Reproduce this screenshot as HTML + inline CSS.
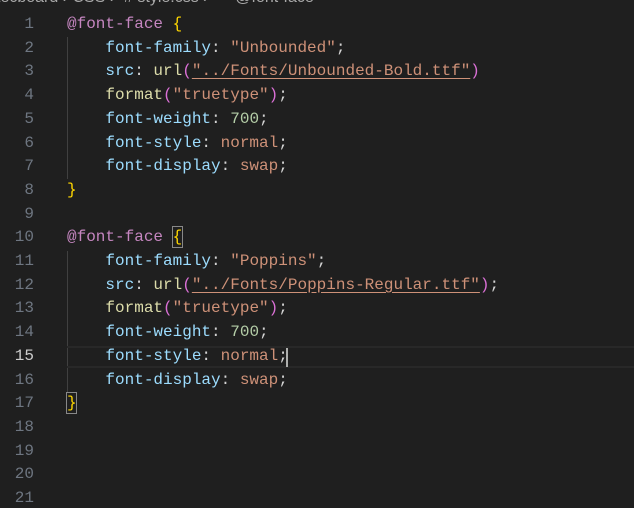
<!DOCTYPE html>
<html><head><style>
html,body{margin:0;padding:0;background:#1f1f1f;width:634px;height:508px;overflow:hidden}
body{font-family:"Liberation Mono",monospace;font-size:16px;position:relative}
.bc{position:absolute;left:-4px;top:-11px;height:18px;color:#a9a9a9;font-family:"Liberation Sans",sans-serif;font-size:16px;white-space:pre;line-height:18px}
.ln{position:absolute;left:0;width:34px;text-align:right;color:#6e7681;height:23.7px;line-height:23.7px}
.cd{position:absolute;left:67px;white-space:pre;height:23.7px;line-height:23.7px;color:#d4d4d4}
.p{color:#9cdcfe}.s{color:#ce9178}.a{color:#c586c0}.b{color:#ffd700}.f{color:#dcdcaa}.n{color:#b5cea8}.pa{color:#da70d6}
.u{text-decoration:underline;text-decoration-color:#ce9178;text-underline-offset:3px}
.guide{position:absolute;left:67px;width:1px;background:#404040}
</style></head><body>
<div class="bc">tecboard › CSS ›  # style.css ›  ⚭ @font-face</div>
<div class="guide" style="top:37px;height:142px"></div>
<div class="guide" style="top:251px;height:142px"></div>
<div style="position:absolute;left:67px;right:0;top:346px;height:22px;border-top:2px solid #282828;border-bottom:2px solid #282828;box-sizing:border-box"></div>
<div style="position:absolute;left:286px;top:348px;width:2px;height:19px;background:#aeafad"></div>
<div style="position:absolute;left:172px;top:226px;width:11px;height:22px;border:1px solid #888;box-sizing:border-box"></div>
<div style="position:absolute;left:66px;top:392px;width:11px;height:22px;border:1px solid #888;box-sizing:border-box"></div>
<script>
const L=[
'<span class="a">@font-face</span> <span class="b">{</span>',
'    <span class="p">font-family</span>: <span class="s">"Unbounded"</span>;',
'    <span class="p">src</span>: <span class="f">url</span><span class="pa">(</span><span class="s u">"../Fonts/Unbounded-Bold.ttf"</span><span class="pa">)</span>',
'    <span class="f">format</span><span class="pa">(</span><span class="s">"truetype"</span><span class="pa">)</span>;',
'    <span class="p">font-weight</span>: <span class="n">700</span>;',
'    <span class="p">font-style</span>: <span class="s">normal</span>;',
'    <span class="p">font-display</span>: <span class="s">swap</span>;',
'<span class="b">}</span>','',
'<span class="a">@font-face</span> <span class="b">{</span>',
'    <span class="p">font-family</span>: <span class="s">"Poppins"</span>;',
'    <span class="p">src</span>: <span class="f">url</span><span class="pa">(</span><span class="s u">"../Fonts/Poppins-Regular.ttf"</span><span class="pa">)</span>;',
'    <span class="f">format</span><span class="pa">(</span><span class="s">"truetype"</span><span class="pa">)</span>;',
'    <span class="p">font-weight</span>: <span class="n">700</span>;',
'    <span class="p">font-style</span>: <span class="s">normal</span>;',
'    <span class="p">font-display</span>: <span class="s">swap</span>;',
'<span class="b">}</span>','','','',''];
let h='';
for(let i=0;i<21;i++){const t=13+i*23.7;
h+=`<div class="ln" style="top:${t}px;${i==14?'color:#cccccc':''}">${i+1}</div><div class="cd" style="top:${t}px">${L[i]}</div>`;}
document.write(h);
</script>
</body></html>
